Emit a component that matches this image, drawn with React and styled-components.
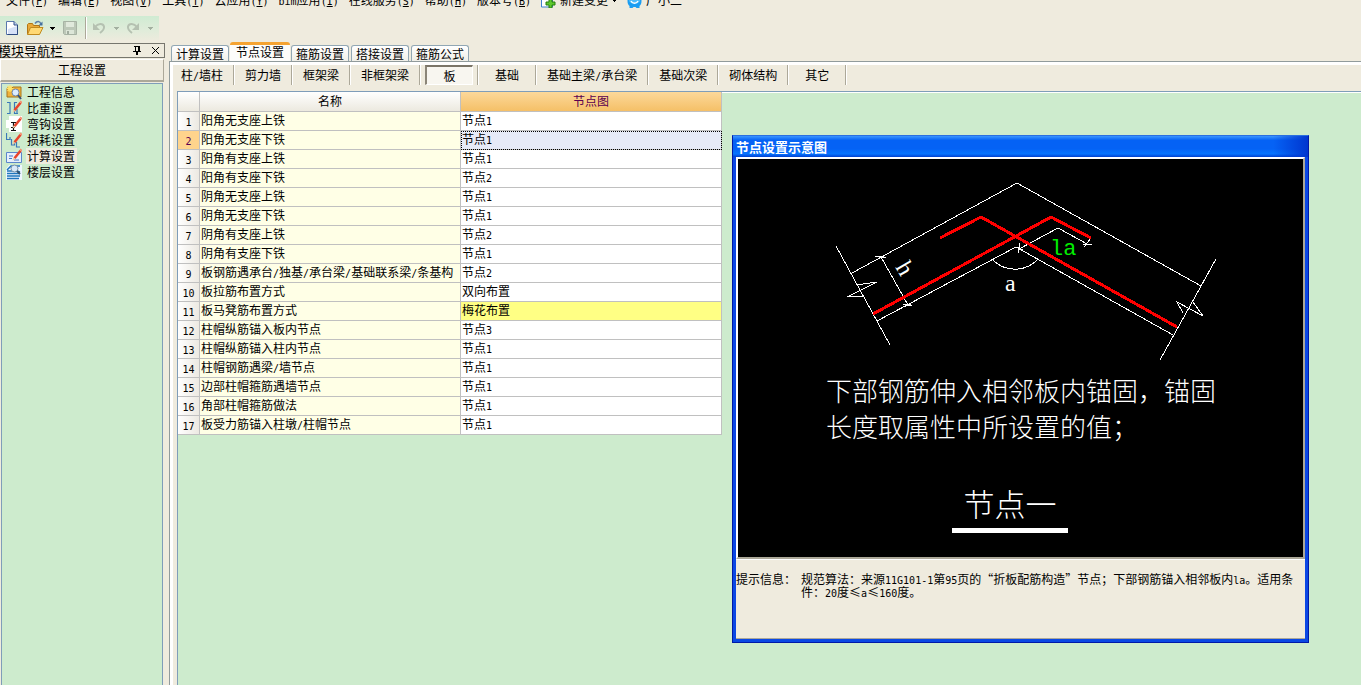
import React, { useState } from "react";
import styled, { createGlobalStyle, css } from "styled-components";

const GlobalStyle = createGlobalStyle`
  * {
    box-sizing: border-box;
  }
  body {
    margin: 0;
    background: #efebde;
    color: #000;
    font: 12px/16px "Noto Sans CJK SC", sans-serif;
  }
  button {
    margin: 0;
    padding: 0;
    border: 0;
    background: none;
    color: inherit;
    font: inherit;
    white-space: nowrap;
  }
`;

const Half = styled.span`
  font-family: "DejaVu Sans Mono", monospace;
  font-size: 10px;
  line-height: 1;
`;

// latin letters and digits take half of a chinese character
const Label = ({ text }) =>
  text
    .split(/([\x21-\x7e]+)/)
    .map((part, i) => (i % 2 ? <Half key={i}>{part}</Half> : part));

const Page = styled.div`
  display: flex;
  flex-direction: column;
  height: 100vh;
  overflow: hidden;
`;

/* ---------- menu and toolbar ---------- */

const MenuBar = styled.nav`
  display: flex;
  flex: none;
  gap: 10px;
  height: 24px;
  margin-top: -12px;
  padding-left: 6px;
  align-items: center;
`;

const MenuItem = styled.button`
  display: flex;
  align-items: center;
  gap: 4px;

  u {
    text-underline-offset: 1px;
  }
`;

const Toolbar = styled.div`
  display: flex;
  flex: none;
  align-items: center;
  width: 159px;
  height: 24px;
  margin: 4px 0 3px;
  padding-left: 4px;
  background: linear-gradient(#cfebd2, #e0ecda 60%, #ecebdd);
`;

const ToolButton = styled.button`
  display: flex;
  flex: none;
  justify-content: center;
  width: ${(p) => p.$width || 16}px;
`;

const ToolDivider = styled.span`
  flex: none;
  width: 2px;
  height: 22px;
  margin: 0 4px 0 1px;
  border-left: 1px solid #aca899;
  border-right: 1px solid #fff;
`;

const Caret = ({ color = "#000" }) => (
  <svg width="5" height="3" viewBox="0 0 5 3" shapeRendering="crispEdges">
    <path d="M0 0h5L2.5 3z" fill={color} />
  </svg>
);

const NewIcon = () => (
  <svg width="16" height="16" viewBox="0 0 16 16">
    <path d="M2.500 1.500h7.500l3.500 3.500v9.500h-11z" fill="#fff" stroke="#5a78ad" />
    <path d="M4 9l9-3v8H4z" fill="#d5e1f7" />
    <path d="M10 1.500v3.500h3.500" fill="#b9cbea" stroke="#33528c" />
    <path d="M13.500 5v9.500h-10" fill="none" stroke="#2c4a80" />
  </svg>
);

const OpenIcon = () => (
  <svg width="18" height="16" viewBox="0 0 18 16">
    <path d="M1.500 14V4.500l1-1h4l1 2h6V14z" fill="#e9a93a" stroke="#b27512" />
    <path d="M1.500 14.500l3-7h12.500l-3.500 7z" fill="#ffd973" stroke="#c08a1e" />
    <path d="M9 3.500c2-3 5-2.500 6 .5" fill="none" stroke="#5b7fa8" strokeWidth="1.500" />
    <path d="M16.500 1.500v4h-4z" fill="#44709f" />
  </svg>
);

const SaveIcon = () => (
  <svg width="16" height="16" viewBox="0 0 16 16">
    <path d="M1.500 1.500h13v13h-12l-1-1z" fill="#bcc8b8" stroke="#a7b3a4" />
    <path d="M4 2h8v5H4z" fill="#e0e9dc" />
    <path d="M4 10h8v4H4z" fill="#dce6d8" />
    <path d="M5 11h2v3H5z" fill="#a1ad9f" />
  </svg>
);

const UndoIcon = ({ flip }) => (
  <svg width="14" height="14" viewBox="0 0 14 14">
    <g transform={flip ? "translate(14 0) scale(-1 1)" : undefined}>
      <path
        d="M3 6c3-4 8-4 9-.5.500 3-2 5-4 6.500"
        fill="none"
        stroke="#b5c1b1"
        strokeWidth="2"
      />
      <path d="M1 2v7h7z" fill="#b5c1b1" />
    </g>
  </svg>
);

const ChangeIcon = () => (
  <svg width="15" height="16" viewBox="0 0 15 16">
    <path d="M.500 1h11v14H.500z" fill="#fff" stroke="#3f80d0" />
    <path d="M8 7h3v3h3v3h-3v3H8v-3H5v-3h3z" fill="#5cc72c" stroke="#277e0e" />
  </svg>
);

const MascotIcon = () => (
  <svg width="15" height="16" viewBox="0 0 15 16">
    <path d="M.500 1h14v8c0 3-1 4-2 5v2h-3l-1-1h-2l-1 1h-3v-2c-1-1-2-2-2-5z" fill="#1b9df2" />
    <path d="M2 2h11v6c0 5-11 5-11 0z" fill="#4cbaf8" />
    <path d="M4 9c1.500 3 5.500 3 7 0" fill="none" stroke="#fff" strokeWidth="1.500" />
  </svg>
);

/* ---------- left navigation ---------- */

const Body = styled.div`
  display: flex;
  flex: 1;
  min-height: 0;
`;

const Sidebar = styled.aside`
  display: flex;
  flex: none;
  flex-direction: column;
  width: 165px;
`;

const SidebarHead = styled.header`
  display: flex;
  align-items: center;
  height: 15px;
  border: 1px solid #77766e;
  border-left: 0;
  font-size: 13px;
  line-height: 13px;

  span {
    flex: 1;
    margin-left: -2px;
  }
  button {
    display: flex;
    margin-right: 4px;
  }
`;

const SectionButton = styled.button`
  height: 23px;
  margin: 1px 1px 1px 0;
  border: 1px solid #fff;
  border-right-color: #aca899;
  border-bottom: 2px solid #aca899;
`;

const NavList = styled.ul`
  flex: 1;
  margin: 0 2px 0 1px;
  padding: 0 0 0 4px;
  border: 1px solid #7f9db9;
  border-bottom: 0;
  background: #cdebcd;
  list-style: none;
`;

const NavItem = styled.button`
  display: flex;
  align-items: center;
  gap: 4px;
  height: 16px;

  span {
    padding: 0 2px 0 1px;
    background: ${(p) => (p.$selected ? "#efebde" : "transparent")};
  }
`;

const Pencil = () => (
  <>
    <path d="M7.500 9.500l6-7.500 2 1.500-6 7.500z" fill="#e8442c" />
    <path d="M13.500 2l1-1.500 2 1.500-1 1.500z" fill="#f78a6c" />
    <path d="M7.500 9.500l-1 3 3-1.500z" fill="#f4c79a" />
  </>
);

const navDrawings = {
  info: (
    <>
      <path d="M1 4h5l1-1h8v10H1z" fill="#f0b33c" stroke="#a8741a" />
      <path d="M4 1v7M.500 4.500h7M1.500 2l5 5M6.500 2l-5 5" stroke="#ffe36b" strokeWidth="1.200" />
      <circle cx="9.500" cy="8.500" r="3.500" fill="#dcecff" stroke="#6f87a8" />
      <path d="M12 11l3 4" stroke="#3c5373" strokeWidth="2" />
    </>
  ),
  weight: (
    <>
      <path
        d="M1 2.500h3v11H1M11 2.500H8.500v11H12M11 9v4"
        fill="none"
        stroke="#3a79b8"
        strokeWidth="1.200"
      />
      <Pencil />
    </>
  ),
  hook: (
    <>
      <path d="M0 0h16v16H0z" fill="#fff" />
      <path d="M0 0h3v4H0zM0 12h3v4H0z" fill="#cdebcd" />
      <path d="M5 6.500h5M7.500 6v8.500M5 14.500h5M5 11.500h4" stroke="#111" strokeWidth="1.200" />
      <Pencil />
    </>
  ),
  loss: (
    <>
      <path
        d="M.500 1v6.500H4V5M5.500 7v6h3v-3M10.500 10v5H14"
        fill="none"
        stroke="#3a79b8"
        strokeWidth="1.200"
      />
      <Pencil />
    </>
  ),
  calc: (
    <>
      <path d="M.500 4.500h15v10H.500z" fill="#e6effc" stroke="#5b86cc" />
      <path d="M3 8h4M3 10.500h3M8 12h5" stroke="#4477c4" />
      <Pencil />
    </>
  ),
  floor: (
    <>
      <path d="M3 1h13v15H0V5z" fill="#eef6ff" />
      <path
        d="M1 7h10l3 1M1 9.500h13M1 12h13M1 14.500h12"
        fill="none"
        stroke="#1f75bd"
        strokeWidth="1.600"
      />
      <path d="M1 6l4-4h9" fill="none" stroke="#1f75bd" strokeWidth="1.500" />
      <circle cx="8.500" cy="4.500" r="3.500" fill="#d8eafa" stroke="#7890a8" />
      <path d="M11 7l3 3" stroke="#33536f" strokeWidth="2" />
    </>
  ),
};

const NavIcon = ({ name }) => (
  <svg width="16" height="16" viewBox="0 0 16 16">
    {navDrawings[name]}
  </svg>
);

/* ---------- work area ---------- */

const Main = styled.main`
  display: flex;
  flex: 1;
  flex-direction: column;
  min-width: 0;
  padding-left: 4px;
`;

const Tabs = styled.div`
  display: flex;
  flex: none;
  gap: 2px;
  align-items: flex-end;
  height: 20px;
  margin: -1px 0 -1px 2px;
`;

const Tab = styled.button`
  height: 17px;
  padding: 0 4px;
  border: 1px solid #91a7b4;
  border-bottom-color: #919b9c;
  border-radius: 3px 3px 0 0;
  background: linear-gradient(#fff, #f0efe8);
  line-height: 15px;

  ${(p) =>
    p.$active &&
    css`
      height: 20px;
      margin: 0 -1px;
      padding: 0 6px 4px;
      border: 0;
      border-top: 3px solid #f5a331;
      background: #fcfcfa;
      line-height: 13px;
    `}
`;

const Panel = styled.div`
  display: flex;
  flex: 1;
  flex-direction: column;
  min-height: 0;
  border-top: 1px solid #919b9c;
  border-left: 1px solid #919b9c;
`;

const PanelInner = styled.div`
  display: flex;
  flex: 1;
  flex-direction: column;
  min-height: 0;
  border-top: 3px solid #fff;
  border-left: 3px solid #fff;
`;

const Members = styled.div`
  display: flex;
  flex: none;
  height: 20px;
  margin: 0 0 6px -2px;
`;

const Member = styled.button`
  min-width: 58px;
  padding: 0 11px 0 10px;
  border-right: 1px solid #fff;
  box-shadow: inset -1px 0 #aca899;
`;

const MemberSlot = styled.div`
  display: flex;
  width: 58px;
  padding: 0 5px 0 4px;
  border-right: 1px solid #fff;
  box-shadow: inset -1px 0 #aca899;
`;

const PressedMember = styled.button`
  flex: 1;
  height: 20px;
  border: 1px solid #fff;
  border-top: 2px solid #7b7568;
  border-left: 2px solid #8b8578;
  background: #f8f6f0;
`;

const Canvas = styled.section`
  position: relative;
  flex: 1;
  min-height: 0;
  margin-left: 4px;
  border-top: 1px solid #7f9db9;
  border-left: 1px solid #7f9db9;
  background: #cdebcd;
  box-shadow: inset 0 1px #fff;
`;

const Grid = styled.table`
  width: 544px;
  border-collapse: separate;
  border-spacing: 0;
  table-layout: fixed;

  th,
  td {
    height: 19px;
    padding: 0 0 2px 1px;
    border-right: 1px solid #c0c0c0;
    border-bottom: 1px solid #c0c0c0;
    font-weight: normal;
    line-height: 16px;
    text-align: left;
    white-space: nowrap;
  }
  thead th {
    height: 20px;
    padding: 0 0 2px;
    text-align: center;
    background: linear-gradient(#fff, #ece9df);
  }
`;

const NodeHead = styled.th`
  && {
    background: linear-gradient(#fcd89a, #f5c067);
    color: #5a0050;
  }
`;

const RowNumber = styled.th`
  && {
    padding: 0 0 1px;
    text-align: center;
    background: ${(p) =>
      p.$current ? "#ffd48c" : "linear-gradient(90deg, #fff, #ece9e2)"};
    color: ${(p) => (p.$current ? "#5a0050" : "#000")};
  }
`;

const NameCell = styled.td`
  background: #ffffe6;
`;

const NodeCell = styled.td`
  background: ${(p) =>
    p.$current ? "#e6eaf7" : p.$changed ? "#ffff84" : "#fff"};
  outline: ${(p) => (p.$current ? "1px dotted #000" : "0")};
  outline-offset: -1px;
`;

/* ---------- floating node window ---------- */

const Window = styled.section`
  position: absolute;
  top: 43px;
  left: 554px;
  width: 577px;
  padding: 0 3px 3px;
  border: 1px solid #0019a8;
  border-top-color: #2a6fe0;
  background: #0a48e4;
`;

const WindowTitle = styled.h2`
  height: 21px;
  margin: 0 -3px;
  padding: 2px 0 0 3px;
  background:
    linear-gradient(90deg, transparent 94%, #0036cf),
    linear-gradient(#3b96ff, #0562f5 20%, #0562f5 60%, #0674ff 85%, #003fd0);
  color: #fff;
  font-size: 13px;
  font-weight: bold;
  line-height: 18px;
`;

const Drawing = styled.figure`
  height: 402px;
  margin: 0;
  border: 2px solid #fff;
  border-right-color: #aca899;
  border-bottom-color: #aca899;
  background: #000;
  color: #fff;

  svg {
    display: block;
    width: 100%;
    height: 213px;
  }
`;

const Caption = styled.p`
  margin: 0 0 0 88px;
  font-size: 26px;
  font-weight: 300;
  line-height: 36px;
`;

const NodeName = styled.figcaption`
  width: 116px;
  margin: 36px auto 0 214px;
  padding-bottom: 3px;
  border-bottom: 5px solid #fff;
  font-size: 31px;
  font-weight: 300;
  line-height: 45px;
  text-align: center;
`;

const Hint = styled.dl`
  display: flex;
  gap: 5px;
  height: 80px;
  margin: 0;
  padding: 13px 6px 0 0;
  border-top: 1px solid #fff;
  border-bottom: 1px solid #aca899;
  background: #efebde;
  line-height: 12px;

  dt {
    flex: none;
  }
  dd {
    margin: 0;
  }
`;

const Diagram = () => (
  <svg viewBox="0 0 565 213" fill="none" stroke="#fff">
    <g shapeRendering="crispEdges">
      <path d="M114 114L279 24 463 127" />
      <path d="M139 162L278 88 435 176" />
      <path d="M98 87L152 186M478 100L422 201" />
      <path d="M118 126L139 123 109 138 125 137" />
      <path d="M445 154L439 143 465 157 455 143" />
      <path d="M143 98L170 146M137 97L148 99M140 100L146 97M165 145L174 147M165 148L173 145" />
      <path d="M281 90L320 69 351 86M282 84L280 94M280 88L285 91M345 86L354 85M346 88L353 79" />
      <path d="M254 100A31 31 0 0 0 300 100" />
    </g>
    <g stroke="#f00" strokeWidth="3" shapeRendering="crispEdges">
      <path d="M202 79L243 58 439 168" />
      <path d="M135 155L313 58 353 79" />
    </g>
    <g stroke="none" fill="#fff" fontFamily="Liberation Serif, serif" fontSize="24">
      <text x="267" y="132">a</text>
      <text transform="translate(157 108) rotate(60)">h</text>
      <text x="312" y="96" fill="#0e0" fontFamily="Liberation Mono, monospace" fontSize="22">
        la
      </text>
    </g>
  </svg>
);

const menus = [
  ["文件", "F"],
  ["编辑", "E"],
  ["视图", "V"],
  ["工具", "T"],
  ["云应用", "Y"],
  ["bim应用", "I"],
  ["在线服务", "S"],
  ["帮助", "H"],
  ["版本号", "B"],
];

const navItems = [
  ["info", "工程信息"],
  ["weight", "比重设置"],
  ["hook", "弯钩设置"],
  ["loss", "损耗设置"],
  ["calc", "计算设置"],
  ["floor", "楼层设置"],
];

const tabs = ["计算设置", "节点设置", "箍筋设置", "搭接设置", "箍筋公式"];

const members = [
  "柱/墙柱",
  "剪力墙",
  "框架梁",
  "非框架梁",
  "板",
  "基础",
  "基础主梁/承台梁",
  "基础次梁",
  "砌体结构",
  "其它",
];

const rows = [
  ["阳角无支座上铁", "节点1"],
  ["阳角无支座下铁", "节点1"],
  ["阳角有支座上铁", "节点1"],
  ["阳角有支座下铁", "节点2"],
  ["阴角无支座上铁", "节点1"],
  ["阴角无支座下铁", "节点1"],
  ["阴角有支座上铁", "节点2"],
  ["阴角有支座下铁", "节点1"],
  ["板钢筋遇承台/独基/承台梁/基础联系梁/条基构", "节点2"],
  ["板拉筋布置方式", "双向布置"],
  ["板马凳筋布置方式", "梅花布置", true],
  ["柱帽纵筋锚入板内节点", "节点3"],
  ["柱帽纵筋锚入柱内节点", "节点1"],
  ["柱帽钢筋遇梁/墙节点", "节点1"],
  ["边部柱帽箍筋遇墙节点", "节点1"],
  ["角部柱帽箍筋做法", "节点1"],
  ["板受力筋锚入柱墩/柱帽节点", "节点1"],
];

const App = () => {
  const [tab, setTab] = useState("节点设置");
  const [member, setMember] = useState("板");
  const [nav, setNav] = useState("calc");
  const [current, setCurrent] = useState(1);

  return (
    <Page lang="zh-CN">
      <GlobalStyle />
      <MenuBar>
        {menus.map(([name, key]) => (
          <MenuItem key={name}>
            <span>
              <Label text={name} />
              <Half>
                (<u>{key}</u>)
              </Half>
            </span>
          </MenuItem>
        ))}
        <MenuItem>
          <ChangeIcon />
          新建变更
          <Caret />
        </MenuItem>
        <MenuItem>
          <MascotIcon />
          广小二
        </MenuItem>
      </MenuBar>
      <Toolbar>
        <ToolButton aria-label="新建">
          <NewIcon />
        </ToolButton>
        <ToolButton aria-label="打开" $width={30}>
          <OpenIcon />
        </ToolButton>
        <ToolButton aria-label="打开列表" $width={5}>
          <Caret />
        </ToolButton>
        <ToolButton aria-label="保存" $width={29}>
          <SaveIcon />
        </ToolButton>
        <ToolDivider />
        <ToolButton aria-label="撤销">
          <UndoIcon />
        </ToolButton>
        <ToolButton aria-label="撤销列表" $width={18}>
          <Caret color="#a3b0a0" />
        </ToolButton>
        <ToolButton aria-label="恢复">
          <UndoIcon flip />
        </ToolButton>
        <ToolButton aria-label="恢复列表" $width={18}>
          <Caret color="#a3b0a0" />
        </ToolButton>
      </Toolbar>
      <Body>
        <Sidebar>
          <SidebarHead>
            <span>模块导航栏</span>
            <button aria-label="固定">
              <svg width="16" height="9" viewBox="0 0 16 9" shapeRendering="crispEdges">
                <path d="M3 0h6v1H3zM4 1h1v4H4zM7 1h2v4H7zM2 5h8v1H2zM5 6h2v3H5z" />
              </svg>
            </button>
            <button aria-label="关闭">
              <svg width="9" height="9" viewBox="0 0 9 9">
                <path d="M1 1l7 7M8 1L1 8" stroke="#000" />
              </svg>
            </button>
          </SidebarHead>
          <SectionButton>工程设置</SectionButton>
          <NavList>
            {navItems.map(([icon, name]) => (
              <li key={icon}>
                <NavItem $selected={nav === icon} onClick={() => setNav(icon)}>
                  <NavIcon name={icon} />
                  <span>{name}</span>
                </NavItem>
              </li>
            ))}
          </NavList>
        </Sidebar>
        <Main>
          <Tabs>
            {tabs.map((name) => (
              <Tab key={name} $active={tab === name} onClick={() => setTab(name)}>
                {name}
              </Tab>
            ))}
          </Tabs>
          <Panel>
            <PanelInner>
              <Members>
                {members.map((name) =>
                  name === member ? (
                    <MemberSlot key={name}>
                      <PressedMember>
                        <Label text={name} />
                      </PressedMember>
                    </MemberSlot>
                  ) : (
                    <Member key={name} onClick={() => setMember(name)}>
                      <Label text={name} />
                    </Member>
                  )
                )}
              </Members>
              <Canvas>
                <Grid>
                  <colgroup>
                    <col width="22" />
                    <col width="261" />
                    <col width="261" />
                  </colgroup>
                  <thead>
                    <tr>
                      <th />
                      <th>名称</th>
                      <NodeHead>节点图</NodeHead>
                    </tr>
                  </thead>
                  <tbody>
                    {rows.map(([name, node, changed], i) => (
                      <tr key={name} onClick={() => setCurrent(i)}>
                        <RowNumber $current={current === i}>
                          <Half>{i + 1}</Half>
                        </RowNumber>
                        <NameCell>
                          <Label text={name} />
                        </NameCell>
                        <NodeCell $current={current === i} $changed={changed}>
                          <Label text={node} />
                        </NodeCell>
                      </tr>
                    ))}
                  </tbody>
                </Grid>
                <Window>
                  <WindowTitle>节点设置示意图</WindowTitle>
                  <Drawing>
                    <Diagram />
                    <Caption>
                      下部钢筋伸入相邻板内锚固，锚固
                      <br />
                      长度取属性中所设置的值；
                    </Caption>
                    <NodeName>节点一</NodeName>
                  </Drawing>
                  <Hint>
                    <dt>提示信息：</dt>
                    <dd>
                      <Label text="规范算法：来源11G101-1第95页的“折板配筋构造”节点；下部钢筋锚入相邻板内la。适用条件：20度≤a≤160度。" />
                    </dd>
                  </Hint>
                </Window>
              </Canvas>
            </PanelInner>
          </Panel>
        </Main>
      </Body>
    </Page>
  );
};

export default App;
